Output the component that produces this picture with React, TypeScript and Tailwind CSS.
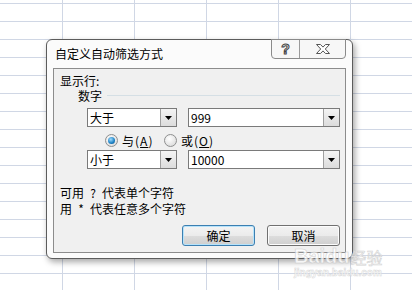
import React from "react";

const font = "font-['SimSun','Noto_Sans_CJK_SC',sans-serif]";

function DropArrow() {
  return (
    <div className="w-[16px] h-full border-l border-[#a0a0a0] bg-[linear-gradient(#f4f4f4,#dcdcdc)] flex items-center justify-center">
      <svg width="7" height="4" viewBox="0 0 7 4">
        <path d="M0 0h7L3.5 4z" fill="#000" />
      </svg>
    </div>
  );
}

function Combo({ value, width }: { value: string; width: string }) {
  return (
    <div className={`${width} h-[19px] flex items-stretch bg-white border border-[#7a7a7a]`}>
      <div className="flex-1 pl-[2px] text-[12px] leading-[17px] text-black">{value}</div>
      <DropArrow />
    </div>
  );
}

function Radio({ checked, label, hot, width }: { checked: boolean; label: string; hot: string; width: string }) {
  return (
    <div className={`${width} shrink-0 flex items-center gap-[4px] whitespace-nowrap`}>
      <div className="shrink-0 w-[13px] h-[13px] rounded-full border border-[#8e8f8f] bg-[radial-gradient(circle_at_40%_35%,#ffffff,#d4d4d4)] flex items-center justify-center">
        {checked && (
          <div className="w-[7px] h-[7px] rounded-full bg-[radial-gradient(circle_at_40%_35%,#9fdcff,#1a7fc2_60%,#0b4d86)]" />
        )}
      </div>
      <span className="text-[12px] leading-[13px] text-black tracking-[1px]">
        {label}(<span className="underline">{hot}</span>)
      </span>
    </div>
  );
}

export default function App() {
  return (
    <div className={`relative w-[412px] h-[290px] overflow-hidden bg-white ${font} [background-image:linear-gradient(to_right,#d0d7e5_1px,transparent_1px),linear-gradient(to_bottom,#d0d7e5_1px,transparent_1px)] [background-size:72px_18px] [background-position:62px_3px]`}>
      {/* dialog window */}
      <div className="absolute left-[46px] top-[39px] w-[307px] h-[220px] rounded-[6px] border border-[#5c5c5c] bg-[#fbfbfb] shadow-[2px_3px_6px_rgba(0,0,0,0.35)] flex flex-col">
        <div className="h-[28px] flex items-start">
          <div className="pl-[8px] pt-[7px] text-[12px] leading-[14px] text-black">自定义自动筛选方式</div>
          <div className="ml-auto mr-[6px] -mt-px flex h-[20px] border border-[#8a8a8a] rounded-b-[4px] bg-[#f7f7f7]">
            <div className="w-[28px] flex items-center justify-center border-r border-[#9a9a9a] text-[14px] font-bold leading-none text-transparent [-webkit-text-stroke:1px_#444] font-['Liberation_Sans',sans-serif]">
              ?
            </div>
            <div className="w-[45px] flex items-center justify-center">
              <svg width="14" height="10" viewBox="0 0 14 10">
                <path
                  d="M0.5 0.5h4l2.5 2.6 2.5-2.6h4l-4.2 4.5 4.2 4.5h-4l-2.5-2.6-2.5 2.6h-4l4.2-4.5z"
                  fill="#fff"
                  stroke="#555"
                  strokeWidth="1"
                />
              </svg>
            </div>
          </div>
        </div>

        {/* content panel */}
        <div className="mx-[6px] mb-[5px] flex-1 border border-[#8c8c8c] bg-[#f0f0f0] flex flex-col text-black">
          <div className="mt-[5px] ml-[6px] h-[13px] text-[12px] leading-[13px]">显示行:</div>
          <div className="mt-[2px] ml-[24px] mr-[5px] h-[13px] flex items-center gap-[5px]">
            <span className="text-[12px] leading-[13px]">数字</span>
            <div className="flex-1 h-[2px] border-t border-[#d5dfe5] border-b-white" />
          </div>

          <div className="mt-[6px] ml-[33px] flex gap-[11px]">
            <Combo value="大于" width="w-[90px]" />
            <Combo value="999" width="w-[152px]" />
          </div>

          <div className="mt-[7px] ml-[51px] h-[13px] flex items-center">
            <Radio checked label="与" hot="A" width="w-[59px]" />
            <Radio checked={false} label="或" hot="O" width="w-[60px]" />
          </div>

          <div className="mt-[3px] ml-[33px] flex gap-[11px]">
            <Combo value="小于" width="w-[90px]" />
            <Combo value="10000" width="w-[152px]" />
          </div>

          <div className="mt-[16px] ml-[6px] text-[12px] leading-[16px]">
            <div className="flex">
              <span>可用</span>
              <span className="w-[18px] text-center">?</span>
              <span>代表单个字符</span>
            </div>
            <div className="flex">
              <span>用</span>
              <span className="w-[18px] text-center">*</span>
              <span>代表任意多个字符</span>
            </div>
          </div>

          <div className="mt-[8px] ml-[128px] flex gap-[12px]">
            <button className="w-[73px] h-[21px] rounded-[3px] border border-[#3c7fb1] shadow-[inset_0_0_0_1px_#b6e3fb] bg-[linear-gradient(#f4f4f4_0%,#ebebeb_50%,#dddddd_51%,#cfcfcf_100%)] text-[12px] leading-[19px] text-black">
              确定
            </button>
            <button className="w-[73px] h-[21px] rounded-[3px] border border-[#707070] shadow-[inset_0_0_0_1px_#fcfcfc] bg-[linear-gradient(#f2f2f2_0%,#ebebeb_50%,#dddddd_51%,#cfcfcf_100%)] text-[12px] leading-[19px] text-black">
              取消
            </button>
          </div>
        </div>
      </div>

      {/* watermark */}
      <div className="absolute left-[294px] top-[246px] flex flex-col items-start opacity-80 pointer-events-none">
        <div className="flex items-end text-white [-webkit-text-stroke:0.6px_#c8c8c8]">
          <span className="font-['Liberation_Sans',sans-serif] font-bold text-[20px] leading-[20px]">Baidu</span>
          <span className="ml-[1px] text-[16px] leading-[18px]">经验</span>
        </div>
        <div className="mt-[2px] font-['Liberation_Sans',sans-serif] font-bold text-[10px] leading-[10px] text-white [-webkit-text-stroke:0.5px_#cfcfcf]">
          jingyan.baidu.com
        </div>
      </div>
    </div>
  );
}
